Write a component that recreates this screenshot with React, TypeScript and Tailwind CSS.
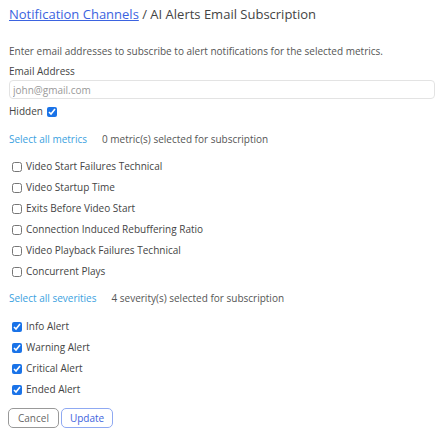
import { useState } from "react";

const metrics = [
  "Video Start Failures Technical",
  "Video Startup Time",
  "Exits Before Video Start",
  "Connection Induced Rebuffering Ratio",
  "Video Playback Failures Technical",
  "Concurrent Plays",
];

const severities = ["Info Alert", "Warning Alert", "Critical Alert", "Ended Alert"];

const App = () => {
  const [picked, setPicked] = useState<string[]>([]);
  const [levels, setLevels] = useState<string[]>(severities);
  const [hidden, setHidden] = useState(true);

  const toggle = (list: string[], set: (v: string[]) => void, item: string) =>
    set(list.includes(item) ? list.filter((x) => x !== item) : [...list, item]);

  return (
    <div className="px-[9px] pt-[4px] font-['Open_Sans',sans-serif] text-[10px] text-[#555]">
      {/* Breadcrumb */}
      <h1 className="text-[13px] leading-[20px] text-[#444]">
        <a href="#" className="text-[#3b63e0] underline">Notification Channels</a> / AI Alerts Email Subscription
      </h1>

      <p className="mt-[20px] leading-[15px]">
        Enter email addresses to subscribe to alert notifications for the selected metrics.
      </p>

      <label className="mt-[5px] block leading-[15px] text-[#444]">Email Address</label>
      <input
        type="text"
        placeholder="john@gmail.com"
        className="mt-[1px] block h-[19px] w-full rounded-[4px] border border-[#e3e3e3] px-[3px] text-[10px] placeholder:text-[#999] outline-none"
      />

      <div className="mt-[5px] flex items-center gap-[4px] leading-[15px] text-[#444]">
        Hidden
        <input
          type="checkbox"
          checked={hidden}
          onChange={() => setHidden(!hidden)}
          className="h-[10px] w-[10px] accent-[#1a73e8]"
        />
      </div>

      {/* Metrics */}
      <div className="mt-[13px] flex items-center gap-[15px] leading-[15px]">
        <a href="#" className="text-[#3ba1e0]" onClick={(e) => { e.preventDefault(); setPicked(metrics); }}>
          Select all metrics
        </a>
        <span className="text-[#555]">{picked.length} metric(s) selected for subscription</span>
      </div>

      <div className="mt-[12px] flex flex-col gap-[6px] pl-[3px]">
        {metrics.map((m) => (
          <label key={m} className="flex items-center gap-[4px] leading-[15px] text-[#444]">
            <input
              type="checkbox"
              checked={picked.includes(m)}
              onChange={() => toggle(picked, setPicked, m)}
              className="h-[10px] w-[10px] accent-[#1a73e8]"
            />
            {m}
          </label>
        ))}
      </div>

      {/* Severities */}
      <div className="mt-[12px] flex items-center gap-[15px] leading-[15px]">
        <a href="#" className="text-[#3ba1e0]" onClick={(e) => { e.preventDefault(); setLevels(severities); }}>
          Select all severities
        </a>
        <span className="text-[#555]">{levels.length} severity(s) selected for subscription</span>
      </div>

      <div className="mt-[13px] flex flex-col gap-[6px] pl-[3px]">
        {severities.map((s) => (
          <label key={s} className="flex items-center gap-[4px] leading-[15px] text-[#444]">
            <input
              type="checkbox"
              checked={levels.includes(s)}
              onChange={() => toggle(levels, setLevels, s)}
              className="h-[10px] w-[10px] accent-[#1a73e8]"
            />
            {s}
          </label>
        ))}
      </div>

      <div className="mt-[11px] flex gap-[2px] -ml-[1px]">
        <button className="h-[20px] rounded-[5px] border border-[#999] px-[9px] text-[10px] text-[#666]">Cancel</button>
        <button className="h-[20px] rounded-[5px] border border-[#8fa9f2] px-[8px] text-[10px] text-[#3e63dd]">Update</button>
      </div>
    </div>
  );
};

export default App;
